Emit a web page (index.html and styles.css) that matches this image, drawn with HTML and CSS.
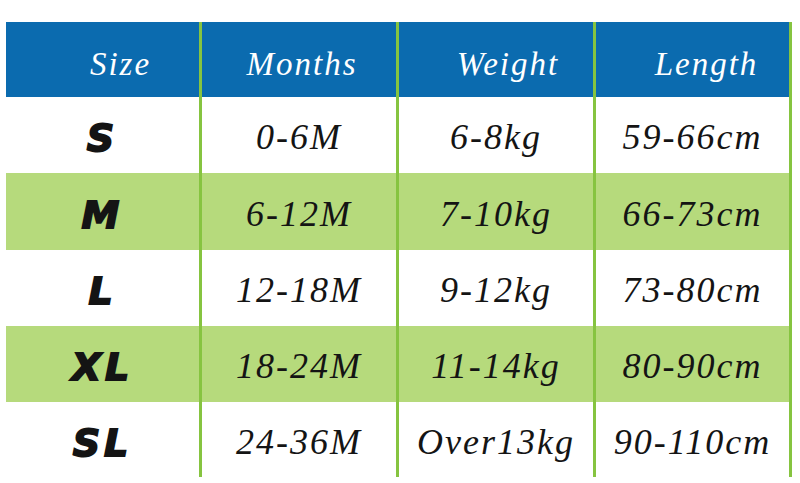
FILE: index.html
```html
<!DOCTYPE html>
<html>
<head>
<meta charset="utf-8">
<link rel="stylesheet" href="styles.css">
</head>
<body>
<div class="chart">
  <div class="cell head h-size">Size</div>
  <div class="cell head h-months">Months</div>
  <div class="cell head h-weight">Weight</div>
  <div class="cell head h-length">Length</div>

  <div class="cell size r1">S</div>
  <div class="cell val r1">0-6M</div>
  <div class="cell val r1">6-8kg</div>
  <div class="cell val r1">59-66cm</div>

  <div class="cell size r2 alt">M</div>
  <div class="cell val r2 alt">6-12M</div>
  <div class="cell val r2 alt">7-10kg</div>
  <div class="cell val r2 alt">66-73cm</div>

  <div class="cell size r3">L</div>
  <div class="cell val r3">12-18M</div>
  <div class="cell val r3">9-12kg</div>
  <div class="cell val r3">73-80cm</div>

  <div class="cell size r4 alt">XL</div>
  <div class="cell val r4 alt">18-24M</div>
  <div class="cell val r4 alt">11-14kg</div>
  <div class="cell val r4 alt">80-90cm</div>

  <div class="cell size r5">SL</div>
  <div class="cell val r5">24-36M</div>
  <div class="cell val r5">Over13kg</div>
  <div class="cell val r5">90-110cm</div>
</div>
</body>
</html>
```

FILE: styles.css
```css
html, body {
  margin: 0;
  padding: 0;
  background: #ffffff;
}
body {
  width: 800px;
  height: 483px;
  overflow: hidden;
}
.chart {
  margin: 22px 0 0 6px;
  width: 786px;
  display: grid;
  grid-template-columns: 193px 194px 194px 193px;
  grid-template-rows: 75px 76px 77px 76px 76px 75px;
  column-gap: 3px;
  padding-right: 3px;
  box-sizing: border-box;
  background: #86c440;
}
.cell {
  display: flex;
  align-items: center;
  justify-content: center;
  background: #ffffff;
  color: #141414;
}
.cell.alt {
  background: #b6da7c;
}
.head {
  background: #0b6baf;
  color: #ffffff;
  font-family: "Liberation Serif", "DejaVu Serif", serif;
  font-style: italic;
  font-size: 33px;
  letter-spacing: 2px;
  padding-top: 10px;
  box-sizing: border-box;
}
.h-size { padding-left: 36px; }
.h-months { padding-left: 6px; }
.h-weight { padding-left: 24px; }
.h-length { padding-left: 28px; }
.size {
  font-family: "DejaVu Sans", "Liberation Sans", sans-serif;
  font-weight: bold;
  font-style: italic;
  font-size: 38px;
  letter-spacing: 4px;
  -webkit-text-stroke: 1.8px #141414;
  padding-top: 6px;
  box-sizing: border-box;
}
.val {
  font-family: "Liberation Serif", "DejaVu Serif", serif;
  font-style: italic;
  font-size: 36px;
  letter-spacing: 2px;
  padding-top: 4px;
  box-sizing: border-box;
}
```
